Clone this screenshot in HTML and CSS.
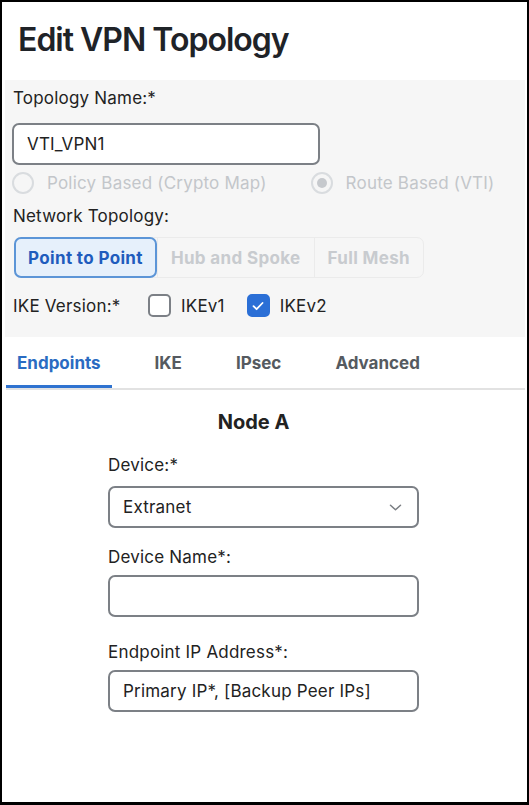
FILE: index.html
```html
<!DOCTYPE html>
<html>
<head>
  <link rel="stylesheet" href="styles.css">
</head>
<body>
  <div class="frame">
    <div class="header">
      <h1 class="title">Edit VPN Topology</h1>
    </div>

    <div class="general">
      <label class="field-label" for="topologyName">Topology Name:*</label>
      <input type="text" id="topologyName" class="text-input name-input" value="VTI_VPN1">

      <div class="radio-row">
        <span class="radio-item">
          <span class="radio"></span>
          Policy Based (Crypto Map)
        </span>
        <span class="radio-item">
          <span class="radio checked"></span>
          Route Based (VTI)
        </span>
      </div>

      <div class="field-label net-label">Network Topology:</div>
      <div class="segmented">
        <button class="seg active">Point to Point</button>
        <button class="seg">Hub and Spoke</button>
        <button class="seg">Full Mesh</button>
      </div>

      <div class="ike-row">
        <span class="ike-label">IKE Version:*</span>
        <span class="check-item">
          <span class="checkbox"></span>
          IKEv1
        </span>
        <span class="check-item">
          <span class="checkbox checked">
            <svg width="14" height="14" viewBox="0 0 14 14"><path d="M2.5 7.2 L5.6 10.2 L11.5 4" fill="none" stroke="#fff" stroke-width="1.8" stroke-linecap="round" stroke-linejoin="round"/></svg>
          </span>
          IKEv2
        </span>
      </div>
    </div>

    <div class="tabs">
      <div class="tab active">Endpoints</div>
      <div class="tab">IKE</div>
      <div class="tab">IPsec</div>
      <div class="tab">Advanced</div>
    </div>

    <div class="node">
      <h2 class="node-title">Node A</h2>

      <label class="field-label device-label">Device:*</label>
      <div class="select-box">
        <span>Extranet</span>
        <svg width="13" height="7" viewBox="0 0 13 7"><path d="M1.5 1.2 L6.5 5.8 L11.5 1.2" fill="none" stroke="#7a7e83" stroke-width="1.5" stroke-linecap="round" stroke-linejoin="round"/></svg>
      </div>

      <label class="field-label devname-label" for="deviceName">Device Name*:</label>
      <input type="text" id="deviceName" class="text-input node-input">

      <label class="field-label ip-label" for="endpointIp">Endpoint IP Address*:</label>
      <input type="text" id="endpointIp" class="text-input node-input" value="Primary IP*, [Backup Peer IPs]">
    </div>
  </div>
</body>
</html>
```

FILE: styles.css
```css
body {
  margin: 0;
  font-family: Inter, "Liberation Sans", sans-serif;
  color: #222;
}

.frame {
  width: 529px;
  height: 805px;
  box-sizing: border-box;
  border: 2px solid #000;
  border-bottom-width: 3px;
  background: #fff;
}

.header {
  height: 78px;
  box-sizing: border-box;
  padding: 18px 0 0 16px;
}

.title {
  margin: 0;
  font-size: 32px;
  line-height: 40px;
  font-weight: 600;
  letter-spacing: -1px;
  color: #1f2328;
}

.general {
  margin: 0 2px 0 3px;
  padding: 8px 8px 20px 8px;
  background: #f6f6f6;
}

.field-label {
  display: block;
  font-size: 17px;
  line-height: 20px;
  letter-spacing: 0.2px;
  color: #222;
}

.text-input {
  display: block;
  box-sizing: border-box;
  height: 42px;
  border: 2px solid #7c8086;
  border-radius: 7px;
  background: #fff;
  font-family: Inter, "Liberation Sans", sans-serif;
  font-size: 17px;
  letter-spacing: 0.2px;
  color: #222;
  padding: 0 13px;
  outline: none;
}

.name-input {
  width: 308px;
  margin: 15px 0 0 -1px;
}

.radio-row {
  display: flex;
  gap: 44px;
  margin: 7px 0 0 -1px;
  font-size: 17px;
  letter-spacing: 0.2px;
  color: #c3c6ca;
}

.radio-item {
  display: flex;
  align-items: center;
  gap: 13px;
}

.radio {
  width: 22px;
  height: 22px;
  box-sizing: border-box;
  border: 2px solid #d9dcdf;
  border-radius: 50%;
  display: flex;
  align-items: center;
  justify-content: center;
}

.radio.checked::after {
  content: "";
  width: 10px;
  height: 10px;
  border-radius: 50%;
  background: #c6c9cd;
}

.net-label {
  margin-top: 12px;
}

.segmented {
  display: inline-flex;
  margin: 11px 0 0 1px;
  border: 1px solid #ebebeb;
  border-radius: 7px;
}

.seg {
  height: 41px;
  margin: -1px 0;
  padding: 0 13px;
  border: none;
  border-left: 1px solid #ebebeb;
  background: transparent;
  font-family: Inter, "Liberation Sans", sans-serif;
  font-size: 17px;
  font-weight: 700;
  letter-spacing: 0.35px;
  color: #c8cbcf;
}

.seg:first-child {
  border-left: none;
}

.seg.active {
  margin-left: -1px;
  padding: 0 12px;
  border: 2px solid #5c95d7;
  border-radius: 7px;
  background: #e6f0fb;
  color: #1f5cbd;
}

.ike-row {
  display: flex;
  align-items: center;
  margin-top: 16px;
  font-size: 17px;
  letter-spacing: 0.2px;
}

.ike-label {
  width: 135px;
}

.check-item {
  display: flex;
  align-items: center;
  gap: 10px;
  margin-right: 22px;
}

.checkbox {
  width: 23px;
  height: 23px;
  box-sizing: border-box;
  border: 2px solid #7c8086;
  border-radius: 5px;
  background: #fff;
  display: flex;
  align-items: center;
  justify-content: center;
}

.checkbox.checked {
  border-color: #2b6fd6;
  background: #2b6fd6;
}

.tabs {
  display: flex;
  gap: 32px;
  margin: 0 2px 0 4px;
  border-bottom: 2px solid #e2e2e2;
}

.tab {
  height: 51px;
  box-sizing: border-box;
  padding: 16px 11px 0;
  font-size: 17px;
  font-weight: 700;
  color: #555a60;
  border-bottom: 3px solid transparent;
}

.tab.active {
  color: #2a6bc2;
  border-bottom-color: #2f73d0;
}

.node {
  width: 311px;
  margin: 20px 0 0 106px;
}

.node-title {
  margin: 0;
  padding-right: 20px;
  text-align: center;
  font-size: 20px;
  line-height: 24px;
  font-weight: 700;
  color: #222;
}

.device-label {
  margin-top: 21px;
}

.select-box {
  display: flex;
  align-items: center;
  justify-content: space-between;
  box-sizing: border-box;
  height: 42px;
  margin-top: 11px;
  padding: 0 15px 0 13px;
  border: 2px solid #7c8086;
  border-radius: 7px;
  background: #fff;
  font-size: 17px;
  letter-spacing: 0.2px;
}

.devname-label {
  margin-top: 19px;
}

.node-input {
  width: 311px;
  margin-top: 8px;
}

.ip-label {
  margin-top: 25px;
}
```
